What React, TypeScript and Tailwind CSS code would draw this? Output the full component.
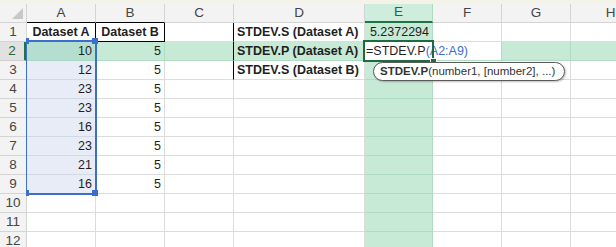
import React from "react";

const COLS = ["A", "B", "C", "D", "E", "F", "G", "H"];
const COL_W = ["w-[69px]", "w-[69px]", "w-[69px]", "w-[131px]", "w-[68px]", "w-[69px]", "w-[69px]", "w-[80px]"];

const A_VALUES = ["10", "12", "23", "23", "16", "23", "21", "16"];
const D_LABELS = ["STDEV.S (Dataset A)", "STDEV.P (Dataset A)", "STDEV.S (Dataset B)"];

function cellBg(r: number, c: number) {
  if (r === 2 && c === 4) return "bg-white border-[#dcdcdc]";
  if (r === 2 && c === 0) return "bg-[#b4dfd0] border-[#a9d7c2]";
  if (r === 2 || c === 4) return "bg-[#c6ead6] border-[#afdbc3]";
  if (c === 0 && r >= 3 && r <= 9) return "bg-[#e8ecf7] border-[#d3d8e6]";
  return "bg-white border-[#dcdcdc]";
}

function cellExtra(r: number, c: number) {
  if (r === 1 && c === 0) return "border-r-black";
  if (r === 1 && c === 1) return "border-r-black border-b-black";
  if (r <= 3 && c === 2) return "border-r-black";
  return "";
}

function cellContent(r: number, c: number) {
  if (c === 0) {
    if (r === 1) return <span className="block w-full text-center font-bold">Dataset A</span>;
    if (r >= 2 && r <= 9) return <span className="block w-full text-right">{A_VALUES[r - 2]}</span>;
  }
  if (c === 1) {
    if (r === 1) return <span className="block w-full text-center font-bold">Dataset B</span>;
    if (r >= 2 && r <= 9) return <span className="block w-full text-right">5</span>;
  }
  if (c === 3 && r <= 3) return <span className="block w-full font-bold whitespace-nowrap">{D_LABELS[r - 1]}</span>;
  if (c === 4 && r === 1) return <span className="block w-full text-right">5.2372294</span>;
  if (c === 4 && r === 2) {
    // in-cell editor spills over F2
    return (
      <div className="absolute left-0 top-0 z-10 h-[18px] w-[136px] bg-white pl-px leading-[18px] whitespace-nowrap text-[#1f1f1f]">
        =STDEV.P<span className="text-[#3a6fce]">(A2:A9)</span>
      </div>
    );
  }
  return null;
}

function RowHeader({ r }: { r: number }) {
  if (r === 2) {
    return (
      <div className="flex h-[19px] w-[27px] shrink-0 items-center justify-center border-r-[3px] border-b border-r-[#217346] border-b-[#cfcfcf] bg-[#e1e1e1] text-[13.5px] text-[#1e6b41]">
        {r}
      </div>
    );
  }
  return (
    <div className="flex h-[19px] w-[27px] shrink-0 items-center justify-center border-r border-b border-[#d4d4d4] bg-[#f3f3f3] text-[13.5px] text-[#454545]">
      {r}
    </div>
  );
}

function Row({ r }: { r: number }) {
  return (
    <div className="flex">
      <RowHeader r={r} />
      {COLS.map((_, c) => (
        <div
          key={c}
          className={`relative flex h-[19px] shrink-0 items-center border-r border-b px-[3px] leading-[18px] text-[#1f1f1f] ${COL_W[c]} ${cellBg(r, c)} ${cellExtra(r, c)}`}
        >
          {cellContent(r, c)}
        </div>
      ))}
    </div>
  );
}

function HeaderRow() {
  return (
    <div className="flex text-[13.5px]">
      <div className="flex h-[19px] w-[27px] shrink-0 items-end justify-end border-r border-b border-[#d4d4d4] bg-[#f3f3f3] pr-[3px] pb-[3px]">
        <svg width="11" height="11" viewBox="0 0 11 11">
          <polygon points="11,0 11,11 0,11" fill="#c8c8c8" />
        </svg>
      </div>
      {COLS.map((col, c) =>
        c === 4 ? (
          <div
            key={col}
            className={`flex h-[19px] shrink-0 items-center justify-center border-r border-b-2 border-r-[#afdbc3] border-b-[#217346] bg-[#cfeddc] text-[#1e6b41] ${COL_W[c]}`}
          >
            {col}
          </div>
        ) : (
          <div
            key={col}
            className={`flex h-[19px] shrink-0 items-center justify-center border-r border-b bg-[#f3f3f3] text-[#454545] ${COL_W[c]} ${
              c <= 1 ? "border-r-[#d4d4d4] border-b-black" : "border-[#d4d4d4]"
            }`}
          >
            {col}
          </div>
        )
      )}
    </div>
  );
}

export default function App() {
  const rows = Array.from({ length: 12 }, (_, i) => i + 1);
  return (
    <div className="relative h-[247px] w-[616px] overflow-hidden bg-white font-['Liberation_Sans',Arial,sans-serif] text-[12.5px]">
      <div className="h-[4px] bg-[#f3f4e7]" />
      <HeaderRow />
      {rows.map((r) => (
        <Row key={r} r={r} />
      ))}

      {/* range reference A2:A9 */}
      <div className="absolute left-[26px] top-[40px] z-20 h-[155px] w-[71px] border-2 border-l border-[#3a6fce]" />
      <div className="absolute left-[26px] top-[38px] z-20 h-[6px] w-[3px] bg-[#3a6fce]" />
      <div className="absolute left-[92px] top-[38px] z-20 h-[6px] w-[6px] bg-[#3a6fce]" />
      <div className="absolute left-[26px] top-[190px] z-20 h-[6px] w-[3px] bg-[#3a6fce]" />
      <div className="absolute left-[92px] top-[190px] z-20 h-[6px] w-[6px] bg-[#3a6fce]" />

      {/* active cell E2 */}
      <div className="absolute left-[363px] top-[40px] z-20 h-[22px] w-[71px] border-2 border-[#1e6b41]" />
      <div className="absolute left-[430px] top-[58px] z-30 h-[6px] w-[7px] border border-white bg-[#1e6b41]" />

      {/* function tooltip */}
      <div className="absolute left-[373px] top-[62px] z-30 flex h-[19px] w-[192px] items-center rounded-full border border-[#5a5a5a] bg-white pl-[6px] text-[11.5px] whitespace-nowrap text-[#333] shadow-[1px_1px_2px_rgba(0,0,0,0.25)]">
        <span className="font-bold">STDEV.P</span>
        <span>(number1, [number2], ...)</span>
      </div>
    </div>
  );
}
